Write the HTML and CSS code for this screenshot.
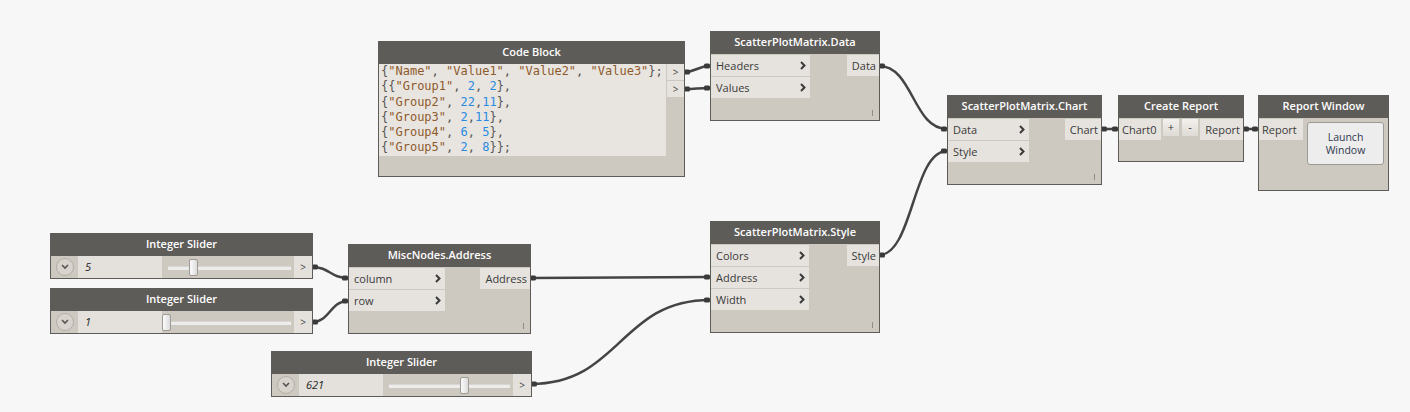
FILE: index.html
```html
<!DOCTYPE html>
<html lang="en">
<head>
    <meta charset="UTF-8">
    <title>Dynamo - Scatter Plot Matrix</title>
    <link rel="stylesheet" href="styles.css">
</head>
<body>
<div class="canvas">
    <!-- wires sit under the nodes -->
    <svg class="wires" width="1410" height="412" viewBox="0 0 1410 412">
        <g class="wire">
            <path d="M684,72 C697,72 697,66 710,66"/>
            <path d="M684,89 C697,89 697,88 710,88"/>
            <path d="M879,66 C913,66 913,129 947,129"/>
            <path d="M879,255 C913,255 913,151 947,151"/>
            <path d="M1101,129 L1118,129"/>
            <path d="M1243,129 L1258,129"/>
            <path d="M312,267 C330,267 330,278 348,278"/>
            <path d="M312,322 C330,322 330,301 348,301"/>
            <path d="M530,278 C620,278 620,277 710,277"/>
            <path d="M531,384 C620,384 620,300 710,300"/>
        </g>
        <g class="caps">
            <rect x="684" y="69.5" width="6" height="5" rx="1.5"/><rect x="704" y="63.5" width="6" height="5" rx="1.5"/>
            <rect x="684" y="86.5" width="6" height="5" rx="1.5"/><rect x="704" y="85.5" width="6" height="5" rx="1.5"/>
            <rect x="879" y="63.5" width="6" height="5" rx="1.5"/><rect x="941" y="126.5" width="6" height="5" rx="1.5"/>
            <rect x="879" y="252.5" width="6" height="5" rx="1.5"/><rect x="941" y="148.5" width="6" height="5" rx="1.5"/>
            <rect x="1101" y="126.5" width="6" height="5" rx="1.5"/><rect x="1112" y="126.5" width="6" height="5" rx="1.5"/>
            <rect x="1243" y="126.5" width="6" height="5" rx="1.5"/><rect x="1252" y="126.5" width="6" height="5" rx="1.5"/>
            <rect x="312" y="264.5" width="6" height="5" rx="1.5"/><rect x="342" y="275.5" width="6" height="5" rx="1.5"/>
            <rect x="312" y="319.5" width="6" height="5" rx="1.5"/><rect x="342" y="298.5" width="6" height="5" rx="1.5"/>
            <rect x="530" y="275.5" width="6" height="5" rx="1.5"/><rect x="704" y="274.5" width="6" height="5" rx="1.5"/>
            <rect x="531" y="381.5" width="6" height="5" rx="1.5"/><rect x="704" y="297.5" width="6" height="5" rx="1.5"/>
        </g>
    </svg>

    <!-- Code Block -->
    <div class="node pos-code">
        <div class="node-title">Code Block</div>
        <div class="code-body">
            <div class="code">
                <div class="code-line">{<span class="str">"Name"</span>, <span class="str">"Value1"</span>, <span class="str">"Value2"</span>, <span class="str">"Value3"</span>};</div>
                <div class="code-line">{{<span class="str">"Group1"</span>, <span class="num">2</span>, <span class="num">2</span>},</div>
                <div class="code-line">{<span class="str">"Group2"</span>, <span class="num">22</span>,<span class="num">11</span>},</div>
                <div class="code-line">{<span class="str">"Group3"</span>, <span class="num">2</span>,<span class="num">11</span>},</div>
                <div class="code-line">{<span class="str">"Group4"</span>, <span class="num">6</span>, <span class="num">5</span>},</div>
                <div class="code-line">{<span class="str">"Group5"</span>, <span class="num">2</span>, <span class="num">8</span>}};</div>
            </div>
            <div class="code-ports">
                <div class="code-port">&gt;</div>
                <div class="code-port">&gt;</div>
            </div>
        </div>
        <div class="node-foot"></div>
    </div>

    <!-- ScatterPlotMatrix.Data -->
    <div class="node pos-data">
        <div class="node-title">ScatterPlotMatrix.Data</div>
        <div class="node-body">
            <div class="inputs in-data">
                <div class="port">Headers <svg class="chev" width="6" height="9"><path d="M1 1 L4.5 4.5 L1 8"/></svg></div>
                <div class="port">Values <svg class="chev" width="6" height="9"><path d="M1 1 L4.5 4.5 L1 8"/></svg></div>
            </div>
            <div class="outputs">
                <div class="port out">Data</div>
            </div>
        </div>
        <div class="node-foot"><span class="lacing"></span></div>
    </div>

    <!-- ScatterPlotMatrix.Chart -->
    <div class="node pos-chart">
        <div class="node-title">ScatterPlotMatrix.Chart</div>
        <div class="node-body">
            <div class="inputs in-chart">
                <div class="port">Data <svg class="chev" width="6" height="9"><path d="M1 1 L4.5 4.5 L1 8"/></svg></div>
                <div class="port">Style <svg class="chev" width="6" height="9"><path d="M1 1 L4.5 4.5 L1 8"/></svg></div>
            </div>
            <div class="outputs">
                <div class="port out">Chart</div>
            </div>
        </div>
        <div class="node-foot"><span class="lacing"></span></div>
    </div>

    <!-- Create Report -->
    <div class="node pos-report">
        <div class="node-title">Create Report</div>
        <div class="node-body report-body">
            <div class="port in-chart0">Chart0</div>
            <div class="port-btn">+</div>
            <div class="port-btn minus">-</div>
            <div class="port out report-out">Report</div>
        </div>
        <div class="node-foot short"></div>
    </div>

    <!-- Report Window -->
    <div class="node pos-window">
        <div class="node-title">Report Window</div>
        <div class="node-body window-body">
            <div class="port in-report">Report</div>
            <div class="launch-btn">Launch<br>Window</div>
        </div>
        <div class="node-foot tall"></div>
    </div>

    <!-- MiscNodes.Address -->
    <div class="node pos-address">
        <div class="node-title">MiscNodes.Address</div>
        <div class="node-body">
            <div class="inputs in-address">
                <div class="port">column <svg class="chev" width="6" height="9"><path d="M1 1 L4.5 4.5 L1 8"/></svg></div>
                <div class="port">row <svg class="chev" width="6" height="9"><path d="M1 1 L4.5 4.5 L1 8"/></svg></div>
            </div>
            <div class="outputs">
                <div class="port out">Address</div>
            </div>
        </div>
        <div class="node-foot"><span class="lacing"></span></div>
    </div>

    <!-- ScatterPlotMatrix.Style -->
    <div class="node pos-style">
        <div class="node-title">ScatterPlotMatrix.Style</div>
        <div class="node-body">
            <div class="inputs in-style">
                <div class="port">Colors <svg class="chev" width="6" height="9"><path d="M1 1 L4.5 4.5 L1 8"/></svg></div>
                <div class="port">Address <svg class="chev" width="6" height="9"><path d="M1 1 L4.5 4.5 L1 8"/></svg></div>
                <div class="port">Width <svg class="chev" width="6" height="9"><path d="M1 1 L4.5 4.5 L1 8"/></svg></div>
            </div>
            <div class="outputs">
                <div class="port out">Style</div>
            </div>
        </div>
        <div class="node-foot"><span class="lacing"></span></div>
    </div>

    <!-- Integer Sliders -->
    <div class="node pos-s1">
        <div class="node-title">Integer Slider</div>
        <div class="slider-row">
            <div class="expander"><span class="expander-btn"><svg width="8" height="6"><path d="M1 1 L4 4 L7 1"/></svg></span></div>
            <div class="slider-value">5</div>
            <div class="slider-track"><span class="slider-thumb" style="left: 27px"></span></div>
            <div class="slider-out">&gt;</div>
        </div>
    </div>

    <div class="node pos-s2">
        <div class="node-title">Integer Slider</div>
        <div class="slider-row">
            <div class="expander"><span class="expander-btn"><svg width="8" height="6"><path d="M1 1 L4 4 L7 1"/></svg></span></div>
            <div class="slider-value">1</div>
            <div class="slider-track"><span class="slider-thumb" style="left: 0px"></span></div>
            <div class="slider-out">&gt;</div>
        </div>
    </div>

    <div class="node pos-s3">
        <div class="node-title">Integer Slider</div>
        <div class="slider-row">
            <div class="expander"><span class="expander-btn"><svg width="8" height="6"><path d="M1 1 L4 4 L7 1"/></svg></span></div>
            <div class="slider-value">621</div>
            <div class="slider-track"><span class="slider-thumb" style="left: 77px"></span></div>
            <div class="slider-out">&gt;</div>
        </div>
    </div>
</div>
</body>
</html>
```

FILE: styles.css
```css
* {
    margin: 0;
    padding: 0;
    box-sizing: border-box;
}

body {
    background: #f7f7f7;
    font-family: 'Open Sans', 'Segoe UI', sans-serif;
    color: #3a3a3a;
}

.canvas {
    position: relative;
    width: 1410px;
    height: 412px;
    overflow: hidden;
}

/* Wires */
.wires {
    position: absolute;
    left: 0;
    top: 0;
}

.wire path {
    fill: none;
    stroke: #444;
    stroke-width: 2.5;
}

.caps rect {
    fill: #3a3a3a;
}

/* Nodes */
.node {
    position: absolute;
    background: #cdc8c0;
    border: 1px solid #5e5c58;
    display: flex;
    flex-direction: column;
}

.node-title {
    height: 22px;
    line-height: 20px;
    background: #5e5c58;
    color: #fff;
    font-size: 11px;
    font-weight: 600;
    text-align: center;
    white-space: nowrap;
}

.node-body {
    display: flex;
    justify-content: space-between;
    align-items: flex-start;
    padding: 1px 0;
}

.inputs,
.outputs {
    display: flex;
    flex-direction: column;
    gap: 1px;
}

.port {
    height: 21px;
    background: #e6e3de;
    font-size: 11px;
    padding: 0 4px 0 5px;
    display: flex;
    align-items: center;
    justify-content: space-between;
    white-space: nowrap;
}

.port.out {
    padding: 0 3px 0 5px;
}

.chev path {
    fill: none;
    stroke: #3a3a3a;
    stroke-width: 2;
}

.node-foot {
    height: 21px;
    display: flex;
    justify-content: flex-end;
    align-items: flex-end;
    padding: 0 6px 4px 0;
}

.node-foot:empty {
    padding: 0;
}

.node-foot.short {
    height: 20px;
}

.node-foot.tall {
    height: 24px;
}

.lacing {
    width: 1px;
    height: 6px;
    background: #8f8b85;
}

/* Node placement on the canvas */
.pos-code { left: 378px; top: 41px; width: 307px; }
.pos-data { left: 710px; top: 31px; width: 170px; }
.pos-chart { left: 947px; top: 95px; width: 155px; }
.pos-report { left: 1118px; top: 95px; width: 126px; }
.pos-window { left: 1258px; top: 95px; width: 131px; }
.pos-address { left: 348px; top: 244px; width: 183px; }
.pos-style { left: 710px; top: 221px; width: 170px; }
.pos-s1 { left: 50px; top: 233px; width: 263px; }
.pos-s2 { left: 50px; top: 288px; width: 263px; }
.pos-s3 { left: 271px; top: 351px; width: 261px; }

.in-data { width: 99px; }
.in-chart { width: 81px; }
.in-address { width: 96px; }
.in-style { width: 98px; }

/* Code block */
.code-body {
    display: flex;
    gap: 1px;
}

.code {
    flex: 1;
    height: 92px;
    background: #e8e5e0;
    padding-left: 2px;
    font-family: 'DejaVu Sans Mono', 'Liberation Mono', monospace;
    font-size: 12px;
    color: #555;
}

.code-line {
    height: 15.3px;
    line-height: 15px;
    white-space: pre;
}

.code .str {
    color: #8e5a2c;
}

.code .num {
    color: #2a8ae0;
}

.code-ports {
    width: 17px;
    display: flex;
    flex-direction: column;
    gap: 1px;
}

.code-port {
    height: 16px;
    line-height: 16px;
    background: #e6e3de;
    font-size: 10px;
    text-align: center;
    color: #444;
}

.pos-code .node-foot {
    height: 20px;
}

/* Create Report */
.report-body {
    justify-content: flex-start;
}

.in-chart0 {
    width: 42px;
    padding: 0 3px;
}

.port-btn {
    width: 16px;
    height: 17px;
    margin-left: 2px;
    background: linear-gradient(#f3f1ee, #dedad4);
    font-size: 11px;
    line-height: 15px;
    text-align: center;
    color: #333;
}

.port-btn.minus {
    margin-left: 3px;
}

.report-out {
    flex: 1;
    margin-left: 2px;
    justify-content: flex-end;
}

/* Report Window */
.window-body {
    justify-content: flex-start;
}

.in-report {
    width: 44px;
    padding: 0 3px;
}

.launch-btn {
    width: 77px;
    height: 43px;
    margin: 3px 0 0 4px;
    background: #ededed;
    border: 1px solid #9d9a95;
    border-radius: 3px;
    font-size: 10.5px;
    line-height: 13px;
    text-align: center;
    padding-top: 8px;
    color: #2f3a4f;
}

/* Integer sliders */
.slider-row {
    display: flex;
    height: 22px;
}

.expander {
    width: 27px;
    display: flex;
    align-items: center;
    justify-content: center;
}

.expander-btn {
    width: 18px;
    height: 18px;
    border: 1px solid #b3afa8;
    border-radius: 50%;
    background: #d8d4cd;
    display: flex;
    align-items: center;
    justify-content: center;
}

.expander-btn path {
    fill: none;
    stroke: #555;
    stroke-width: 1.6;
}

.slider-value {
    width: 84px;
    background: #e4e1dc;
    font-size: 11px;
    font-style: italic;
    line-height: 22px;
    padding-left: 7px;
    color: #222;
}

.slider-track {
    flex: 1;
    position: relative;
}

.slider-track::before {
    content: '';
    position: absolute;
    left: 6px;
    right: 3px;
    top: 10px;
    height: 3px;
    background: #ececec;
    border-top: 1px solid #d9d6d0;
}

.slider-thumb {
    position: absolute;
    top: 3px;
    width: 9px;
    height: 17px;
    border: 1px solid #9e9a94;
    border-radius: 2px;
    background: linear-gradient(90deg, #fbfbfb, #dcdcdc);
}

.slider-out {
    width: 18px;
    background: #e4e1dc;
    font-size: 10px;
    line-height: 22px;
    text-align: center;
    color: #444;
}
```
